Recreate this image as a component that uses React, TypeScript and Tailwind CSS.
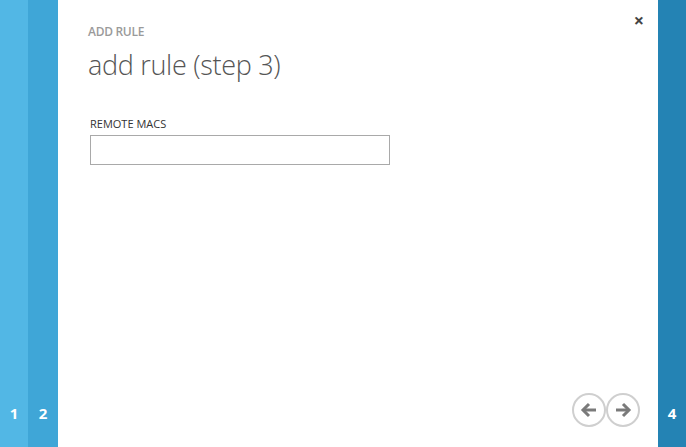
import React from "react";

function Circle({ dir }: { dir: "left" | "right" }) {
  return (
    <div className="w-[34px] h-[34px] rounded-full border-2 border-[#cfcfcf] flex items-center justify-center">
      <svg width="18" height="16" viewBox="0 0 18 16">
        {dir === "left" ? (
          <g stroke="#7a7a7a" strokeWidth="3" fill="none" strokeLinecap="butt" strokeLinejoin="miter">
            <path d="M16 8 H3" />
            <path d="M9 2 L3 8 L9 14" />
          </g>
        ) : (
          <g stroke="#7a7a7a" strokeWidth="3" fill="none" strokeLinecap="butt" strokeLinejoin="miter">
            <path d="M2 8 H15" />
            <path d="M9 2 L15 8 L9 14" />
          </g>
        )}
      </svg>
    </div>
  );
}

export default function App() {
  return (
    <div
      className="flex w-[686px] h-[447px] overflow-hidden"
      style={{ fontFamily: '"Open Sans", "Noto Sans", sans-serif' }}
    >
      <div className="w-[28px] bg-[#52b7e5] flex flex-col justify-end items-center pb-[26px]">
        <span className="text-white font-bold text-[15px] leading-none">1</span>
      </div>
      <div className="w-[30px] bg-[#3fa6d7] flex flex-col justify-end items-center pb-[26px]">
        <span className="text-white font-bold text-[15px] leading-none">2</span>
      </div>
      <div className="w-[600px] bg-white flex flex-col relative">
        <div className="absolute right-[14px] top-[11px] text-[#444] text-[18px] font-bold leading-none">×</div>
        <div className="pl-[30px] pt-[26px]">
          <div className="text-[12px] text-[#9a9a9a] font-semibold leading-none tracking-tight">ADD RULE</div>
          <div className="text-[27px] text-[#555] font-light leading-none mt-[13px] tracking-[-0.3px]">add rule (step 3)</div>
        </div>
        <div className="pl-[32px] pt-[40px]">
          <div className="text-[11px] text-[#333] leading-none">REMOTE MACS</div>
          <div className="mt-[6px] w-[300px] h-[30px] border border-[#a9a9a9]" />
        </div>
        <div className="flex-1" />
        <div className="flex justify-end pr-[18px] pb-[20px]">
          <Circle dir="left" />
          <Circle dir="right" />
        </div>
      </div>
      <div className="w-[28px] bg-[#2483b4] flex flex-col justify-end items-center pb-[26px]">
        <span className="text-white font-bold text-[15px] leading-none">4</span>
      </div>
    </div>
  );
}
